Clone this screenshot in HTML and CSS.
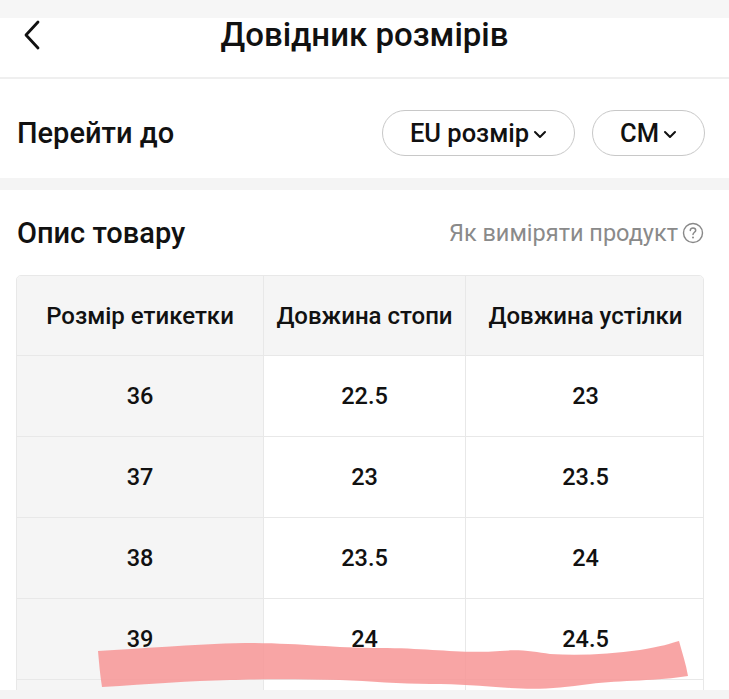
FILE: index.html
```html
<!DOCTYPE html>
<html lang="uk">
<head>
<meta charset="utf-8">
<link rel="stylesheet" href="styles.css">
</head>
<body>
<div class="page">
  <div class="topstrip"></div>
  <header class="nav">
    <span class="back"><svg width="18" height="30" viewBox="0 0 18 30"><path d="M15 2 L3 15 L15 28" fill="none" stroke="#111" stroke-width="2.8" stroke-linecap="round" stroke-linejoin="round"/></svg></span>
    <h1 class="title">Довідник розмірів</h1>
  </header>
  <section class="jump">
    <div class="jump-label">Перейти до</div>
    <div class="pills">
      <button class="pill pill-eu">EU розмір<svg class="chev" width="14" height="9" viewBox="0 0 14 9"><path d="M2 2 L7 7 L12 2" fill="none" stroke="#111" stroke-width="2" stroke-linecap="round" stroke-linejoin="round"/></svg></button>
      <button class="pill pill-cm">CM<svg class="chev" width="14" height="9" viewBox="0 0 14 9"><path d="M2 2 L7 7 L12 2" fill="none" stroke="#111" stroke-width="2" stroke-linecap="round" stroke-linejoin="round"/></svg></button>
    </div>
  </section>
  <div class="band"></div>
  <section class="desc">
    <div class="desc-head">
      <div class="desc-title">Опис товару</div>
      <div class="howto">Як виміряти продукт<svg width="22" height="22" viewBox="0 0 22 22"><circle cx="11" cy="11" r="9.5" fill="none" stroke="#888" stroke-width="1.4"/><path d="M8.3 8.6 C8.3 6.9 9.5 6 11 6 C12.6 6 13.7 7 13.7 8.4 C13.7 10.2 11 10.4 11 12.6" fill="none" stroke="#888" stroke-width="1.5" stroke-linecap="round"/><circle cx="11" cy="15.6" r="1" fill="#888"/></svg></div>
    </div>
    <div class="table">
      <div class="cell th c1">Розмір етикетки</div>
      <div class="cell th c2">Довжина стопи</div>
      <div class="cell th c3">Довжина устілки</div>

      <div class="cell c1 first">36</div>
      <div class="cell c2">22.5</div>
      <div class="cell c3">23</div>

      <div class="cell c1 first">37</div>
      <div class="cell c2">23</div>
      <div class="cell c3">23.5</div>

      <div class="cell c1 first">38</div>
      <div class="cell c2">23.5</div>
      <div class="cell c3">24</div>

      <div class="cell c1 first">39</div>
      <div class="cell c2">24</div>
      <div class="cell c3">24.5</div>

      <div class="cell c1 first"></div>
      <div class="cell c2"></div>
      <div class="cell c3"></div>
    </div>
  </section>
  <div class="bottom-band"></div>
  <svg class="scribble" width="729" height="699" viewBox="0 0 729 699"><path d="M98 651 C140 649 190 644 245 643 C300 643 330 648 380 648 C430 648 460 654 500 651 C520 649 535 652 550 654 C580 656 610 654 640 650 C660 647 672 643 679 641 C682 652 686 664 688 676 C660 681 620 680 590 684 C560 688 540 690 510 688 C480 686 460 684 430 684 C400 684 370 681 340 680 C300 679 260 679 230 680 C190 681 150 684 102 687 C100 675 99 662 98 651 Z" fill="#f79595" fill-opacity="0.85"/></svg>
</div>
</body>
</html>
```
FILE: styles.css
```css
* { box-sizing: border-box; }
html, body { margin: 0; padding: 0; }
body {
  font-family: Roboto, "Noto Sans", "Liberation Sans", sans-serif;
  color: #111;
  background: #f4f4f4;
}
.page {
  position: relative;
  width: 729px;
  height: 699px;
  overflow: hidden;
  background: #f4f4f4;
}
.topstrip { height: 18px; background: #f6f6f6; }
.nav {
  height: 61px;
  background: #fff;
  border-bottom: 2px solid #efefef;
  display: flex;
  align-items: flex-start;
  padding: 2px 0 0 23px;
  position: relative;
}
.back { display: flex; }
.title {
  margin: 0;
  position: absolute;
  left: 0; right: 0; top: -3px;
  text-align: center;
  font-size: 33px;
  font-weight: 500;
  line-height: 40px;
  pointer-events: none;
}
.jump {
  height: 99px;
  background: #fff;
  display: flex;
  align-items: center;
  justify-content: space-between;
  padding: 8px 24px 0 17px;
}
.jump-label { font-size: 29px; font-weight: 500; }
.pills { display: flex; gap: 17px; }
.pill {
  font-family: inherit;
  background: #fff;
  border: 1.5px solid #c8c8c8;
  border-radius: 23px;
  height: 46px;
  display: flex;
  align-items: center;
  justify-content: center;
  gap: 4px;
  font-size: 25.5px;
  font-weight: 500;
  color: #111;
  padding: 0;
}
.pill-eu { width: 193px; }
.pill-cm { width: 113px; }
.chev { margin-top: 3px; }
.band { height: 12px; background: #f4f4f4; }
.desc {
  height: 500px;
  background: #fff;
  padding: 0 25px 0 16px;
  overflow: hidden;
}
.desc-head {
  height: 85px;
  display: flex;
  align-items: center;
  justify-content: space-between;
  padding: 0 0 0 1px;
}
.desc-title { font-size: 29px; font-weight: 500; }
.howto {
  display: flex;
  align-items: center;
  gap: 4px;
  font-size: 23.5px;
  color: #8a8a8a;
}
.table {
  display: grid;
  grid-template-columns: 247px 202px 239px;
  grid-template-rows: 80px;
  grid-auto-rows: 81px;
  border: 1px solid #e8e8e8;
  border-radius: 5px;
  overflow: hidden;
}
.cell {
  display: flex;
  align-items: center;
  justify-content: center;
  font-size: 23.5px;
  font-weight: 500;
  border-right: 1px solid #e8e8e8;
  border-bottom: 1px solid #e8e8e8;
  background: #fff;
}
.th { font-size: 24px; background: #f5f5f5; }
.cell.c3 { border-right: none; }
.first { background: #f5f5f5; }
.bottom-band { height: 9px; background: #f4f4f4; }
.scribble { position: absolute; left: 0; top: 0; pointer-events: none; }
```
